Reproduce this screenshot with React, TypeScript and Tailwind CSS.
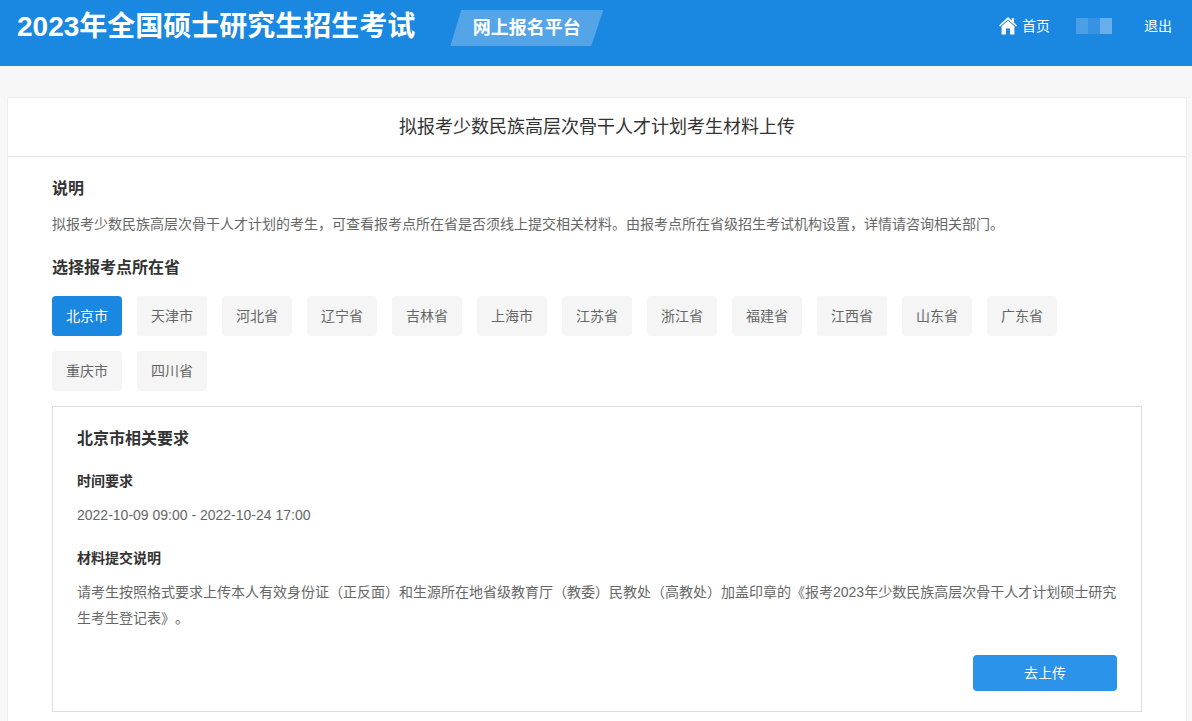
const FONT = "font-['Liberation_Sans','Noto_Sans_CJK_SC',sans-serif]";

const provinces = [
  "北京市", "天津市", "河北省", "辽宁省", "吉林省", "上海市", "江苏省",
  "浙江省", "福建省", "江西省", "山东省", "广东省", "重庆市", "四川省",
];

function HomeIcon() {
  return (
    <svg viewBox="0 0 18 18" className="h-[18px] w-[18px]" fill="#fff">
      <path d="M9 0 L12.8 3.4 L12.8 1.2 L15 1.2 L15 5.6 L18 8.4 L17 9.4 L9 2.4 L1 9.4 L0 8.4 Z" />
      <path d="M9 3.6 L15.4 9.2 L15.4 17.6 L11 17.6 L11 11.4 L7 11.4 L7 17.6 L2.6 17.6 L2.6 9.2 Z" />
    </svg>
  );
}

function Header() {
  return (
    <div className="flex h-[66px] items-start justify-between bg-[#1a87e0] text-white">
      <div className="flex items-start">
        <h1 className="ml-[17px] mt-[8px] text-[28px] leading-[38px] font-bold whitespace-nowrap">
          2023年全国硕士研究生招生考试
        </h1>
        <div className="ml-[35px] mt-[10px] flex h-9 w-[153px] items-center justify-center bg-[#54a4e8] [clip-path:polygon(11px_0,100%_0,calc(100%-12px)_100%,0_100%)]">
          <span className="text-lg font-bold">网上报名平台</span>
        </div>
      </div>
      <div className="flex items-center pt-[16px] pr-[20px] text-sm leading-5">
        <HomeIcon />
        <span className="ml-[5px]">首页</span>
        <div className="ml-[26px] flex h-4 w-9 bg-[#3a95e4]">
          <div className="w-3 bg-[#4a9fe7]" />
          <div className="w-3 bg-[#3792e4]" />
          <div className="w-3 bg-[#66afec]" />
        </div>
        <span className="ml-[32px]">退出</span>
      </div>
    </div>
  );
}

function Requirements() {
  return (
    <div className="h-[306px] border border-[#ddd] px-6 pt-5">
      <h3 className="text-base leading-6 font-bold text-[#333]">北京市相关要求</h3>
      <h4 className="mt-5 text-sm leading-5 font-bold text-[#333]">时间要求</h4>
      <p className="mt-[14px] text-sm leading-5 text-[#666]">2022-10-09 09:00 - 2022-10-24 17:00</p>
      <h4 className="mt-[23px] text-sm leading-5 font-bold text-[#333]">材料提交说明</h4>
      <p className="mt-[11px] text-sm leading-[26px] text-[#666] [text-spacing-trim:space-all]">
        请考生按照格式要求上传本人有效身份证（正反面）和生源所在地省级教育厅（教委）民教处（高教处）加盖印章的《报考2023年少数民族高层次骨干人才计划硕士研究生考生登记表》。
      </p>
      <div className="mt-6 flex justify-end">
        <button className="h-9 w-36 rounded bg-[#2b93e9] text-sm text-white">去上传</button>
      </div>
    </div>
  );
}

export default function App() {
  return (
    <div className={`${FONT} h-[721px] overflow-hidden bg-[#f7f7f7]`}>
      <Header />
      <div className="ml-[7px] mr-[5px] mt-[31px] border border-[#eee] bg-white pb-10">
        <div className="flex h-[59px] items-center justify-center border-b border-[#e6e6e6] text-lg text-[#333]">
          拟报考少数民族高层次骨干人才计划考生材料上传
        </div>
        <div className="px-11 pt-5">
          <h2 className="text-base leading-6 font-bold text-[#333]">说明</h2>
          <p className="mt-[13px] text-sm leading-5 text-[#666]">
            拟报考少数民族高层次骨干人才计划的考生，可查看报考点所在省是否须线上提交相关材料。由报考点所在省级招生考试机构设置，详情请咨询相关部门。
          </p>
          <h2 className="mt-[22px] text-base leading-6 font-bold text-[#333]">选择报考点所在省</h2>
          <div className="mt-4 flex flex-wrap">
            {provinces.map((name, i) => (
              <div
                key={name}
                className={
                  i === 0
                    ? "mr-[15px] mb-[15px] flex h-10 w-[70px] items-center justify-center rounded bg-[#1a87e0] text-sm text-white"
                    : "mr-[15px] mb-[15px] flex h-10 w-[70px] items-center justify-center rounded bg-[#f5f5f5] text-sm text-[#666]"
                }
              >
                {name}
              </div>
            ))}
          </div>
          <Requirements />
        </div>
      </div>
    </div>
  );
}
